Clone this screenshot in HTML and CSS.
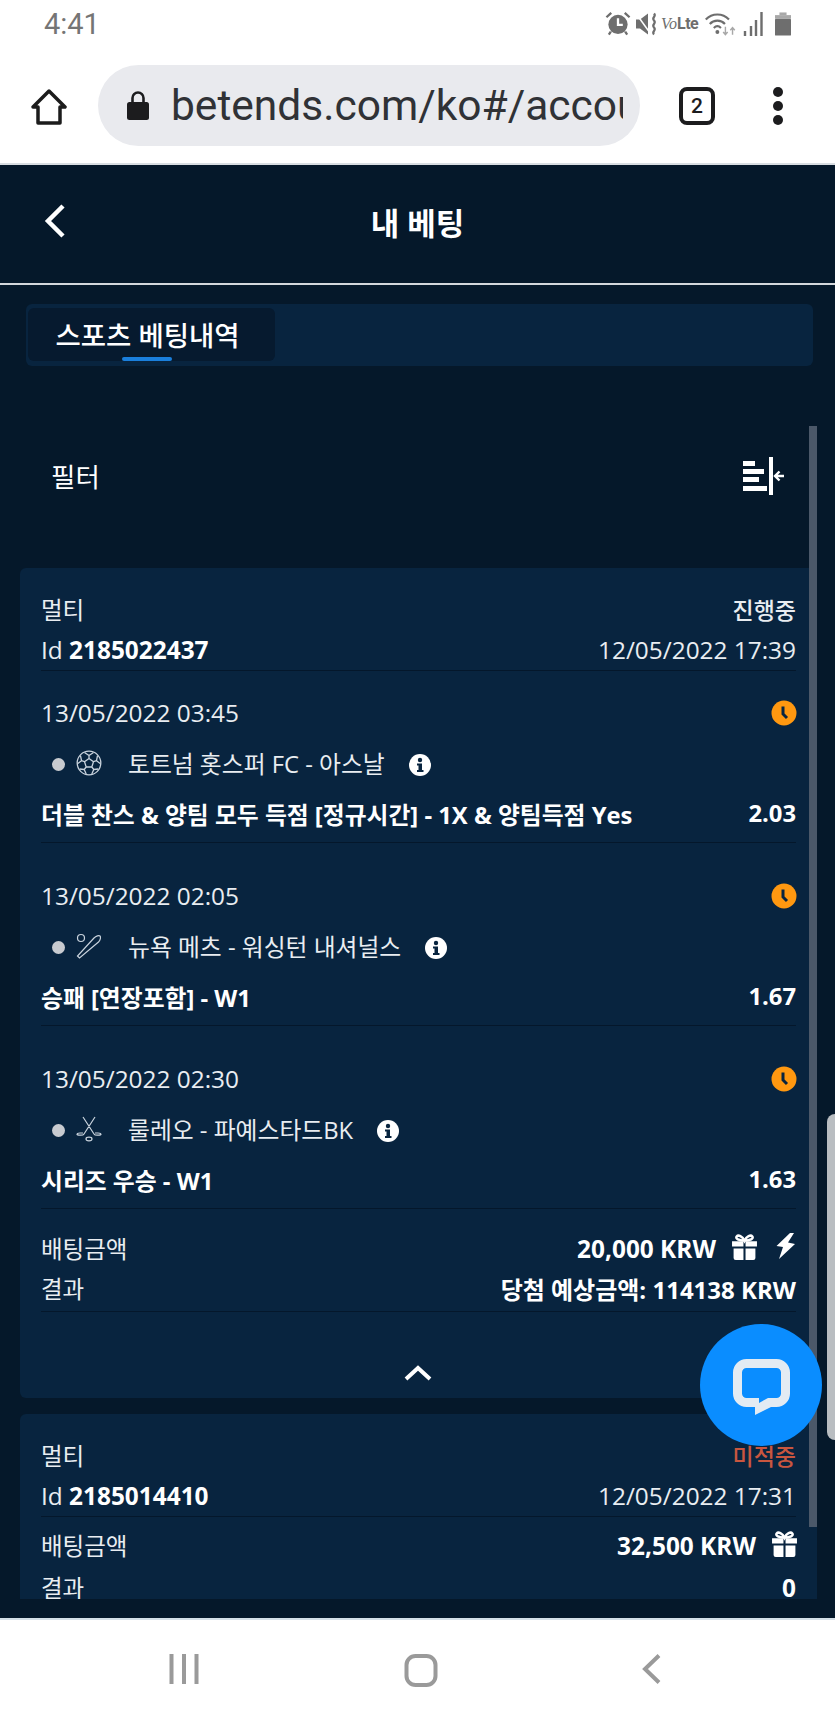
FILE: index.html
```html
<!DOCTYPE html>
<html lang="ko">
<head>
    <meta charset="UTF-8">
    <meta name="viewport" content="width=device-width, initial-scale=1.0">
    <title>내 베팅</title>
    <link rel="stylesheet" href="styles.css">
</head>
<body>
    <svg class="defs" width="0" height="0">
        <symbol id="info" viewBox="0 0 22 22">
            <circle cx="11" cy="11" r="11" fill="#fff"/>
            <circle cx="11" cy="6" r="2.2" fill="#08243f"/>
            <path d="M8 9.5h5v6.5h1.5v2h-6.5v-2h1.5v-4.500h-1.500z" fill="#08243f"/>
        </symbol>
        <symbol id="clock" viewBox="0 0 26 26">
            <circle cx="13" cy="13" r="12.500" fill="#ff9810"/>
            <path d="M12 6.500v7.500l4 4" fill="none" stroke="#08243f" stroke-width="3"/>
        </symbol>
        <symbol id="gift" viewBox="0 0 26 26">
            <path d="M1 7h11v5h-11zM14 7h11v5h-11zM2.500 14h9.500v11h-7.500a2 2 0 0 1-2-2zM14 14h9.500v9a2 2 0 0 1-2 2h-7.500z" fill="#fff"/>
            <path d="M13 6.500c-2-4.500-6-6-7.500-4s2 4 7.500 4c5.500 0 9-2 7.500-4s-5.500-.5-7.500 4z" fill="none" stroke="#fff" stroke-width="2.400"/>
        </symbol>
    </svg>

    <div class="statusbar">
        <span class="clocktime">4:41</span>
        <div class="statusicons">
            <svg width="26" height="25" viewBox="0 0 27 25"><circle cx="13.500" cy="13.500" r="10" fill="#6e6e6e"/><path d="M13.500 7v7h5" fill="none" stroke="#fff" stroke-width="2.400"/><path d="M1.500 6l5-4.500M25.500 6l-5-4.500M6 21l-2 3M21 21l2 3" stroke="#6e6e6e" stroke-width="2.400"/></svg>
            <svg class="muteicon" width="25" height="26" viewBox="0 0 25 25"><path d="M1 8h4l8-6v21l-8-6h-4z" fill="#6e6e6e"/><path d="M1 2l13 18" stroke="#fff" stroke-width="1.500"/><path d="M19 2c3 3-3 4 0 7s-3 4 0 7s-3 4 0 7" fill="none" stroke="#6e6e6e" stroke-width="2.200"/></svg>
            <span class="volte"><i>Vo</i><b>Lte</b></span>
            <svg class="wifi" width="33" height="24" viewBox="0 0 37 26"><path d="M2 8c7-7.500 19-7.500 26 0M6.500 13c4.500-5 12.500-5 17 0M11 17.500c2.500-2.500 5.500-2.500 8 0" fill="none" stroke="#6e6e6e" stroke-width="2.400"/><circle cx="15" cy="22" r="2.200" fill="#6e6e6e"/><path d="M24 16v9M21.500 22l2.500 3l2.500-3M32 25v-8M29.500 20l2.500-3l2.500 3" fill="none" stroke="#a8a8a8" stroke-width="1.600"/></svg>
            <svg class="signal" width="20" height="26" viewBox="0 0 20 26"><path d="M2 20v5M8 15v10M13 9v16M18.500 1v24" stroke="#6e6e6e" stroke-width="2.400"/></svg>
            <svg class="battery" width="16" height="26" viewBox="0 0 18 26"><path d="M5 0h8v3h-8z" fill="#a8a8a8"/><rect x="0" y="3" width="18" height="4" fill="#a8a8a8"/><rect x="0" y="7" width="18" height="19" rx="1" fill="#6e6e6e"/></svg>
        </div>
    </div>

    <div class="browserbar">
        <svg class="homeicon" width="36" height="36" viewBox="0 0 36 36"><path d="M2 18l16-16l16 16h-5v16h-22v-16z" fill="none" stroke="#1c1c1c" stroke-width="3.500" stroke-linejoin="round"/></svg>
        <div class="urlpill">
            <svg width="22" height="29" viewBox="0 0 22 29"><path d="M5.500 12v-5a5.500 5.500 0 0 1 11 0v5" fill="none" stroke="#1c1c1e" stroke-width="2.600"/><rect y="11" width="22" height="18" rx="2.500" fill="#1c1c1e"/></svg>
            <span class="urltext">betends.com/ko#/accou</span>
        </div>
        <span class="tabcount">2</span>
        <div class="menudots"><i></i><i></i><i></i></div>
    </div>

    <div class="app">
        <div class="topbar">
            <svg class="backicon" width="24" height="36" viewBox="0 0 24 36"><path d="M20 3l-15 15l15 15" fill="none" stroke="#fff" stroke-width="4.500"/></svg>
            <span class="title">내 베팅</span>
        </div>

        <div class="tabs">
            <div class="tab active">스포츠 베팅내역</div>
        </div>

        <div class="content">
            <div class="scrollbar"></div>

            <div class="filter">
                <span>필터</span>
                <svg width="41" height="38" viewBox="0 0 41 38"><path d="M0 4h12v5h-12zM0 12h21v5h-21zM0 20h16v5h-16zM0 29h24v5h-24z" fill="#fff"/><path d="M26 0h4v38h-4z" fill="#fff"/><path d="M41 19h-9M36.500 14.500l-4.500 4.500l4.500 4.500" fill="none" stroke="#fff" stroke-width="2.400"/></svg>
            </div>

            <div class="card">
                <div class="row"><span class="kr">멀티</span><span class="status">진행중</span></div>
                <div class="row lined"><span>Id <b>2185022437</b></span><span>12/05/2022 17:39</span></div>

                <div class="sel">
                    <div class="row datebar"><span>13/05/2022 03:45</span><svg class="clockicon"><use href="#clock"/></svg></div>
                    <div class="team">
                        <i class="dot"></i>
                        <svg class="sport" viewBox="0 0 26 26"><g fill="none" stroke="#c9d3dd" stroke-width="1.300"><circle cx="13" cy="13" r="11.800"/><path d="M13 8.500l4.500 3.200l-1.700 5.300h-5.600l-1.700-5.300zM13 8.500v-3M17.500 11.700l3-1M15.800 17l2 2.500M10.200 17l-2 2.500M8.500 11.700l-3-1M8.500 2.500l4.500 3l4.500-3M20.500 10.700l1-5M20.500 10.700l4 3M17.800 19.500l4.500-.5M17.800 19.500l-2 4.500M8.200 19.500l-4.500-.5M8.200 19.500l2 4.500M5.500 10.700l-1-5M5.500 10.700l-4 3"/></g></svg>
                        <span>토트넘 홋스퍼 FC - 아스날</span>
                        <svg class="infoicon"><use href="#info"/></svg>
                    </div>
                    <div class="row market"><span>더블 찬스 &amp; 양팀 모두 득점 [정규시간] - 1X &amp; 양팀득점 Yes</span><span>2.03</span></div>
                </div>

                <div class="sel">
                    <div class="row datebar"><span>13/05/2022 02:05</span><svg class="clockicon"><use href="#clock"/></svg></div>
                    <div class="team">
                        <i class="dot"></i>
                        <svg class="sport" viewBox="0 0 26 26"><circle cx="5" cy="5" r="3.500" fill="none" stroke="#c9d3dd" stroke-width="1.200"/><path d="M1.500 23l2 2l19-16c2-2 2.500-5 1.500-6s-4 0-6 2z" fill="none" stroke="#c9d3dd" stroke-width="1.200"/></svg>
                        <span>뉴욕 메츠 - 워싱턴 내셔널스</span>
                        <svg class="infoicon"><use href="#info"/></svg>
                    </div>
                    <div class="row market"><span>승패 [연장포함] - W1</span><span>1.67</span></div>
                </div>

                <div class="sel">
                    <div class="row datebar"><span>13/05/2022 02:30</span><svg class="clockicon"><use href="#clock"/></svg></div>
                    <div class="team">
                        <i class="dot"></i>
                        <svg class="sport" viewBox="0 0 26 26"><path d="M7 1l11 17c1 2 7 1 7 0.500s-1-1.500-3-1.500h-3M19 1l-11 17c-1 2-7 1-7 0.500s1-1.500 3-1.500h3" fill="none" stroke="#c9d3dd" stroke-width="1.200"/><ellipse cx="13" cy="23" rx="3" ry="1.800" fill="none" stroke="#c9d3dd" stroke-width="1.200"/></svg>
                        <span>룰레오 - 파예스타드BK</span>
                        <svg class="infoicon"><use href="#info"/></svg>
                    </div>
                    <div class="row market"><span>시리즈 우승 - W1</span><span>1.63</span></div>
                </div>

                <div class="summary">
                    <div class="row"><span class="kr">배팅금액</span>
                        <span class="amount"><b>20,000 KRW</b>
                            <svg class="gifticon"><use href="#gift"/></svg>
                            <svg class="bolticon" viewBox="0 0 20 26"><path d="M14 0l-13.500 13l6.500 1l-4 12l16-15l-7-1.500l6-9.500z" fill="#fff"/></svg>
                        </span>
                    </div>
                    <div class="row lined"><span class="kr">결과</span><b class="payout">당첨 예상금액: 114138 KRW</b></div>
                </div>

                <div class="collapse">
                    <svg width="28" height="16" viewBox="0 0 28 16"><path d="M2 14l12-11l12 11" fill="none" stroke="#fff" stroke-width="4"/></svg>
                </div>
            </div>

            <div class="card second">
                <div class="row"><span class="kr">멀티</span><span class="status lost">미적중</span></div>
                <div class="row lined"><span>Id <b>2185014410</b></span><span>12/05/2022 17:31</span></div>
                <div class="summary tight">
                    <div class="row"><span class="kr">배팅금액</span>
                        <span class="amount"><b>32,500 KRW</b><svg class="gifticon last"><use href="#gift"/></svg></span>
                    </div>
                    <div class="row"><span class="kr">결과</span><b>0</b></div>
                </div>
            </div>
        </div>

        <div class="pagehandle"></div>
        <div class="chatbtn">
            <svg width="57" height="56" viewBox="0 0 57 56"><rect x="4.500" y="4.500" width="48" height="39" rx="9" fill="none" stroke="#e3ebf3" stroke-width="9"/><path d="M22 40v16l18-9v-7z" fill="#e3ebf3"/><path d="M26 39v5l9-5z" fill="#0a8dff"/></svg>
        </div>
    </div>

    <div class="navbar">
        <svg width="30" height="30" viewBox="0 0 30 30"><path d="M2.500 0v30M15 0v30M27.500 0v30" stroke="#9a9a9a" stroke-width="4"/></svg>
        <svg width="34" height="33" viewBox="0 0 34 33"><rect x="2.500" y="2" width="29" height="29" rx="9" fill="none" stroke="#9a9a9a" stroke-width="4"/></svg>
        <svg width="20" height="30" viewBox="0 0 20 30"><path d="M17 1.500l-14 13.500l14 13.500" fill="none" stroke="#9a9a9a" stroke-width="4"/></svg>
    </div>
</body>
</html>
```

FILE: styles.css
```css
* {
    box-sizing: border-box;
}

html, body {
    margin: 0;
    padding: 0;
}

body {
    width: 835px;
    height: 1716px;
    overflow: hidden;
    display: flex;
    flex-direction: column;
    background-color: #fff;
    font-family: "Open Sans", "Noto Sans CJK KR", sans-serif;
    font-size: 24.4px;
    color: #e9edf1;
}

.defs {
    position: absolute;
}

/* phone + browser chrome */
.statusbar {
    height: 55px;
    flex: none;
    display: flex;
    align-items: center;
    justify-content: space-between;
    padding: 0 44px 8px 44px;
    font-family: Roboto, sans-serif;
    color: #757575;
}

.clocktime {
    font-size: 29px;
}

.statusicons {
    display: flex;
    align-items: center;
}

.muteicon {
    margin-left: 4px;
}

.volte {
    display: flex;
    align-items: baseline;
    width: 33px;
    margin-left: 1px;
    white-space: nowrap;
    font-size: 16px;
    color: #6e6e6e;
}

.volte i {
    font-family: "Liberation Serif", serif;
    font-size: 16px;
}

.volte b {
    letter-spacing: -0.5px;
}

.wifi {
    margin-left: 10px;
}

.signal {
    margin-left: 6px;
}

.battery {
    margin-left: 12px;
}

.browserbar {
    height: 110px;
    flex: none;
    display: flex;
    align-items: center;
    padding: 0 0 7px 31px;
    border-bottom: 2px solid #d8dde2;
    color: #1c1c1e;
}

.homeicon {
    margin-top: 2px;
}

.urlpill {
    width: 542px;
    height: 81px;
    margin-left: 31px;
    padding-left: 29px;
    display: flex;
    align-items: center;
    gap: 22px;
    overflow: hidden;
    border-radius: 41px;
    background-color: #e9eaee;
}

.urltext {
    width: 452px;
    overflow: hidden;
    white-space: nowrap;
    font-family: Roboto, sans-serif;
    font-size: 42.5px;
    color: #303236;
}

.tabcount {
    width: 36px;
    height: 38px;
    margin-left: 39px;
    display: flex;
    align-items: center;
    justify-content: center;
    border: 4px solid #1c1c1e;
    border-radius: 8px;
    font-family: Roboto, sans-serif;
    font-size: 21px;
    font-weight: 500;
}

.menudots {
    margin-left: 58px;
    display: flex;
    flex-direction: column;
    gap: 4px;
}

.menudots i {
    width: 10px;
    height: 10px;
    border-radius: 50%;
    background-color: #1c1c1e;
}

/* site */
.app {
    height: 1453px;
    flex: none;
    position: relative;
    overflow: hidden;
    background-color: #05182a;
}

.topbar {
    height: 120px;
    position: relative;
    display: flex;
    align-items: center;
    justify-content: center;
    padding-bottom: 4px;
    border-bottom: 2px solid #d3d7db;
}

.backicon {
    position: absolute;
    left: 43px;
    top: 38px;
}

.title {
    font-size: 31px;
    font-weight: 700;
    color: #fff;
    margin-bottom: 1px;
}

.tabs {
    height: 62px;
    margin: 19px 22px 0 26px;
    padding: 4px 2px;
    border-radius: 6px;
    background-color: #08243f;
}

.tab {
    width: 247px;
    height: 53px;
    position: relative;
    display: flex;
    align-items: center;
    justify-content: center;
    padding: 0 8px 2px 0;
    border-radius: 6px;
    background-color: #061a2f;
    font-size: 27.5px;
    font-weight: 500;
    color: #fff;
}

.tab::after {
    content: "";
    position: absolute;
    left: 94px;
    bottom: 0;
    width: 50px;
    height: 4px;
    border-radius: 2px;
    background-color: #1a7fdc;
}

.content {
    height: 1233px;
    margin: 0 18px 0 20px;
    position: relative;
    overflow: hidden;
}

.scrollbar {
    position: absolute;
    top: 60px;
    right: 0;
    z-index: 2;
    width: 8px;
    height: 1101px;
    background-color: #4b5869;
}

.filter {
    height: 202px;
    padding: 17px 33px 0 31px;
    display: flex;
    align-items: center;
    justify-content: space-between;
    font-size: 26.5px;
    color: #fff;
}

.card {
    height: 830px;
    padding: 20px 21px 0 21px;
    border-radius: 6px;
    background-color: #08243f;
}

.card.second {
    height: 185px;
    margin-top: 16px;
    padding-top: 20px;
    border-radius: 6px 6px 0 0;
}

.row {
    height: 41px;
    display: flex;
    align-items: center;
    justify-content: space-between;
    white-space: nowrap;
}

.row b {
    font-weight: 700;
    color: #fff;
}

.kr {
    font-size: 23.5px;
}

.lined {
    height: 42px;
    border-bottom: 1px solid #04172b;
}

.status {
    font-weight: 500;
    font-size: 23px;
}

.status.lost {
    color: #c9563f;
}

.sel {
    padding: 20px 0 5px;
    border-bottom: 1px solid #04172b;
}

.sel + .sel {
    margin-top: 11px;
}

.datebar {
    height: 42px;
}

.clockicon {
    width: 26px;
    height: 26px;
    margin: 2px -1px 0 0;
}

.team {
    height: 58px;
    padding-left: 11px;
    display: flex;
    align-items: center;
    font-size: 23.8px;
}

.team span {
    margin-left: 26px;
}

.dot {
    width: 13px;
    height: 13px;
    margin-top: 4px;
    border-radius: 50%;
    background-color: #c8cbd0;
}

.sport {
    width: 26px;
    height: 26px;
    margin: 2px 0 0 11px;
}

.infoicon {
    width: 22px;
    height: 22px;
    margin: 6px 0 0 24px;
}

.market {
    height: 46px;
    padding-bottom: 2px;
    font-size: 23.8px;
    font-weight: 700;
    color: #fff;
}

.summary {
    padding-top: 18px;
}

.summary .row {
    height: 42px;
}

.summary .lined {
    height: 43px;
    padding-bottom: 4px;
}

.summary.tight {
    padding-top: 7px;
}

.payout {
    font-size: 24px;
}

.amount {
    display: flex;
    align-items: center;
}

.gifticon {
    width: 27px;
    height: 27px;
    margin-left: 15px;
    margin-top: -2px;
}

.gifticon.last {
    margin-right: -2px;
}

.bolticon {
    width: 20px;
    height: 26px;
    margin-left: 18px;
    margin-top: -4px;
}

.collapse {
    margin-top: 53px;
    display: flex;
    justify-content: center;
    padding-right: 1px;
}

.pagehandle {
    position: absolute;
    right: 0;
    top: 949px;
    width: 8px;
    height: 326px;
    border-radius: 8px 0 0 8px;
    background-color: #b9bdc1;
}

.chatbtn {
    position: absolute;
    left: 700px;
    top: 1159px;
    z-index: 3;
    width: 122px;
    height: 122px;
    padding-top: 4px;
    display: flex;
    align-items: center;
    justify-content: center;
    border-radius: 50%;
    background-color: #0a8dff;
}

.navbar {
    flex: 1;
    padding: 34px 173px 0 169px;
    display: flex;
    align-items: flex-start;
    justify-content: space-between;
    border-top: 2px solid #d5e0e8;
}
```
